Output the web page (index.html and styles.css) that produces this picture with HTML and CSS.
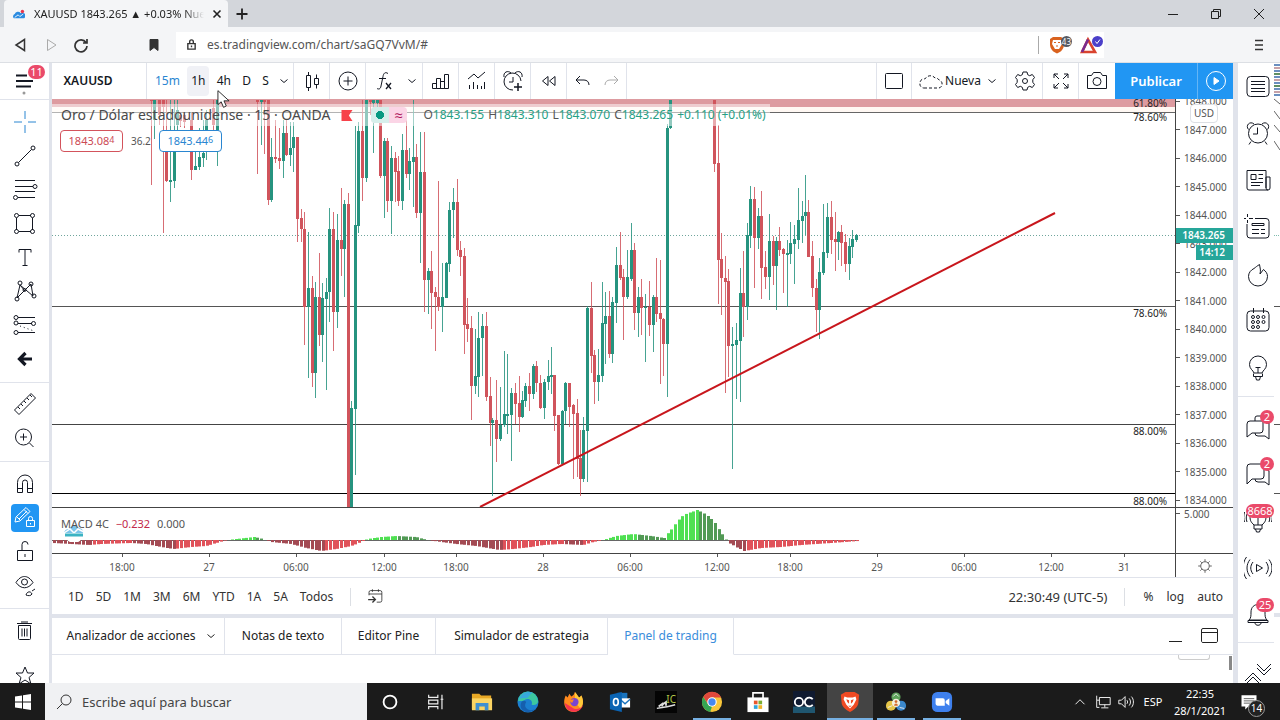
FILE: index.html
```html
<!DOCTYPE html>
<html lang="es">

<head>
    <meta charset="UTF-8" />
    <meta name="viewport" content="width=device-width, initial-scale=1.0" />
    <title>XAUUSD 1843.265</title>
    <link rel="stylesheet" href="styles.css">
</head>

<body>
    <header class="titlebar">
        <div class="tab">
            <svg class="favicon" viewBox="0 0 14 14"><path d="M1 12a3 3 0 0 1 1-5 4 4 0 0 1 7-1 3 3 0 0 1 4 6z" fill="#2b8be0" stroke="none" /><circle cx="11" cy="4" r="2" fill="#e8384f" stroke="none" /><path d="M2 11l4-3 2 2 4-3" stroke="#fff" fill="none" /></svg>
            <span class="tab-title">XAUUSD 1843.265 ▲ +0.03% Nueva</span>
            <button class="tab-close" aria-label="Cerrar pestaña"><svg viewBox="0 0 10 10"><path d="M1.500 1.500l7 7M8.500 1.500l-7 7" stroke-width="1.600" /></svg></button>
        </div>
        <button class="tab-new" aria-label="Nueva pestaña"><svg viewBox="0 0 12 12"><path d="M6 0.500v11M0.500 6h11" stroke-width="1.800" /></svg></button>
        <div class="window-buttons">
            <button aria-label="Minimizar"><svg viewBox="0 0 12 12"><path d="M1 6.500h10" /></svg></button>
            <button aria-label="Restaurar"><svg viewBox="0 0 12 12"><path d="M1.500 3.500h7v7h-7zM3.500 3.500v-2h7v7h-2" /></svg></button>
            <button aria-label="Cerrar"><svg viewBox="0 0 12 12"><path d="M1 1l10 10M11 1L1 11" /></svg></button>
        </div>
    </header>

    <nav class="addressbar">
        <button class="nav-btn" aria-label="Atrás"><svg viewBox="0 0 16 16"><path d="M11.500 2.500v11L3 8z" stroke-width="1.500" /></svg></button>
        <button class="nav-btn faded" aria-label="Adelante"><svg viewBox="0 0 16 16"><path d="M4.500 2.500v11L13 8z" /></svg></button>
        <button class="nav-btn" aria-label="Recargar"><svg viewBox="0 0 16 16"><path d="M13 5.500A6 6 0 1 0 14 9M14 2v4h-4" stroke-width="1.700" /></svg></button>
        <button class="nav-btn bookmark" aria-label="Marcador"><svg viewBox="0 0 16 16"><path d="M4 2.500h8v11l-4-3-4 3z" fill="#333" /></svg></button>
        <div class="url">
            <svg class="lock" viewBox="0 0 12 14"><path d="M2 6h8v6H2zM4 6V4a2 2 0 0 1 4 0v2M6 8v2" stroke-width="1.500" /></svg>
            <input type="text" aria-label="Dirección" value="es.tradingview.com/chart/saGQ7VvM/#">
            <div class="shields">
                <svg viewBox="0 0 24 18"><path d="M1 3l3-2h8l3 2v5c0 5-3 8-7 9.500C4 16 1 13 1 8z" fill="#d9621f" stroke="none" /><path d="M4 4h8l1 4-3 5H6L3 8z" fill="#fff" stroke="none" /><path d="M5 6.500h2M9 6.500h2M7 10h2" stroke="#d9621f" /><circle cx="17.500" cy="5.500" r="5.500" fill="#555962" stroke="none" /></svg>
                <span>43</span>
            </div>
            <svg class="bat" viewBox="0 0 24 18"><path d="M8 3.500L2 16h13z" stroke="#d9432f" stroke-width="2.600" /><path d="M8 3.500L2 16" stroke="#7a2b8f" stroke-width="2.600" /><circle cx="17.500" cy="5.500" r="5.500" fill="#4b3fc9" stroke="none" /><path d="M15.500 5.500l1.500 2 3-4" stroke="#fff" /></svg>
        </div>
        <button class="nav-btn menu" aria-label="Menú"><svg viewBox="0 0 16 16"><path d="M4 3.500h8M4 8h8M4 12.500h8" stroke-width="1.300" /></svg></button>
    </nav>

    <main class="workspace">
        <aside class="tools">
            <button class="tool hamburger" aria-label="Menú principal"><svg viewBox="0 0 28 28"><path d="M5 8.500h11M5 14h17M5 19.500h15" stroke-width="2" /><circle cx="13" cy="26" r="1.500" fill="#999" stroke="none" /></svg><span class="badge">11</span></button>
            <div class="tool-group">
                <button class="tool blue" aria-label="Cursor"><svg viewBox="0 0 28 28"><path d="M14 3v8M14 17v8M3 14h8M17 14h8" /></svg></button>
                <button class="tool" aria-label="Línea de tendencia"><svg viewBox="0 0 28 28"><path d="M7.500 20.500l13-13" /><circle cx="6" cy="22" r="2" /><circle cx="22" cy="6" r="2" /></svg></button>
                <button class="tool" aria-label="Fibonacci"><svg viewBox="0 0 28 28"><path d="M4 4.500h20M4 10.500h18M4 15.500h20M7 21.500h17" /><circle cx="24" cy="10.500" r="2" /><circle cx="4.500" cy="21.500" r="2" /></svg></button>
                <button class="tool" aria-label="Rectángulo"><svg viewBox="0 0 28 28"><path d="M8 5.500h12M8 21.500h12M5.500 8v12M21.500 8v12" /><circle cx="5.500" cy="5.500" r="2" /><circle cx="21.500" cy="5.500" r="2" /><circle cx="5.500" cy="21.500" r="2" /><circle cx="21.500" cy="21.500" r="2" /></svg></button>
                <button class="tool" aria-label="Texto"><svg viewBox="0 0 28 28"><path d="M8 8.500V5.500h12v3M14 5.500v16M11.500 21.500h5" /></svg></button>
                <button class="tool" aria-label="Patrones"><svg viewBox="0 0 28 28"><path d="M6 20l3-13 13 11-2-12L6 20M9 7l5 6" /><circle cx="6" cy="21" r="2" /><circle cx="9" cy="5" r="2" /><circle cx="20" cy="6" r="2" /><circle cx="23" cy="18" r="2" /><circle cx="13.500" cy="12" r="1.500" /></svg></button>
                <button class="tool" aria-label="Previsión"><svg viewBox="0 0 28 28"><path d="M7 5.500h17M7 11.500h14M7 20.500h17" /><path d="M9 14l14 5" stroke-dasharray="1 3" /><circle cx="5" cy="5.500" r="2" /><circle cx="5" cy="11" r="2" /><circle cx="22.500" cy="11.500" r="2" /><circle cx="5" cy="20.500" r="2" /></svg></button>
                <button class="tool" aria-label="Flecha"><svg viewBox="0 0 28 28"><path d="M21 13H9M14.500 7L8.500 13l6 6" stroke-width="3.200" /></svg></button>
            </div>
            <div class="tool-group">
                <button class="tool" aria-label="Regla"><svg viewBox="0 0 28 28"><path d="M3.500 19L20 2.500l4.500 4.500L8 23.500zM7 16l2 2M10 13l2 2M13 10l2 2M16 7l2 2M19 4l2 2" /></svg></button>
                <button class="tool" aria-label="Ampliar"><svg viewBox="0 0 28 28"><circle cx="12.500" cy="12" r="8" /><path d="M18.500 18l4 4M12.500 8.500v7M9 12h7" /></svg></button>
            </div>
            <div class="tool-group">
                <button class="tool" aria-label="Imán"><svg viewBox="0 0 28 28"><path d="M6.500 22.500v-10a7.500 7.500 0 0 1 15 0v10h-5v-10a2.500 2.500 0 0 0-5 0v10zM6.500 18.500h5M16.500 18.500h5" /></svg></button>
                <button class="tool" aria-label="Bloquear dibujo"><svg class="selected" viewBox="0 0 28 28"><path d="M4 18l1-5L15 3.500l4 4L9 17zM6 13l3 3M13 5.500l4 4M8 15l8-8" /><path d="M15.500 16.500h8v6h-8zM17.500 16v-1.500a2 2 0 0 1 4 0V16M19.500 19v1.500" /></svg></button>
                <button class="tool" aria-label="Bloquear todo"><svg viewBox="0 0 28 28"><path d="M6.500 12.500h15v10h-15zM11 12.500v-6a3 3 0 0 1 6 0M14 16v3" /></svg></button>
                <button class="tool" aria-label="Ocultar"><svg viewBox="0 0 28 28"><path d="M5 10.500c5-8 12-8 17 0-5 7-12 7-17 0z" /><circle cx="13.500" cy="10" r="3" /><path d="M15 23c1-4 5-4 6-1-1 2-4 2-6 1zM21 19l3-2" /></svg></button>
            </div>
            <div class="tool-group">
                <button class="tool" aria-label="Eliminar"><svg viewBox="0 0 28 28"><path d="M7.500 8.500h12v13a1 1 0 0 1-1 1h-10a1 1 0 0 1-1-1zM6 6.500h15M10 5h7M11 11.500v8M13.500 11.500v8M16 11.500v8" /></svg></button>
                <button class="tool star" aria-label="Favoritos"><svg viewBox="0 0 28 28"><path d="M14 5l2.500 6h6.500l-5 4.500 2 6.500-6-4-6 4 2-6.500-5-4.500h6.500z" /></svg></button>
            </div>
        </aside>

        <section class="center">
            <div class="toolbar">
                <button class="cell symbol">XAUUSD</button>
                <div class="cell intervals">
                    <button class="on">15m</button>
                    <button class="hover">1h</button>
                    <button>4h</button>
                    <button>D</button>
                    <button>S</button>
                    <button aria-label="Más intervalos"><svg class="chev" viewBox="0 0 8 6"><path d="M0.500 1.500L4 4.500l3.500-3" /></svg></button>
                </div>
                <button class="cell" aria-label="Velas"><svg viewBox="0 0 28 28"><path d="M8.500 8.500h4v12h-4zM10.500 5v3.500M10.500 20.500V24M16.500 11.500h4v6h-4zM18.500 7.500v4M18.500 17.500v4" /></svg></button>
                <button class="cell" aria-label="Comparar"><svg viewBox="0 0 28 28"><circle cx="14" cy="14" r="9" /><path d="M14 9.500v9M9.500 14h9" /></svg></button>
                <div class="cell fx">
                    <button aria-label="Indicadores"><svg viewBox="0 0 28 28"><path d="M16 6.500c-3-2-4.500 0-5 3L9 19c-.5 3-2 3.500-4 2.500M7 11.500h7" /><path d="M14 16l5 6M19 16l-5 6" stroke-width="1.300" /></svg></button>
                    <button aria-label="Favoritos de indicadores"><svg class="chev" viewBox="0 0 8 6"><path d="M0.500 1.500L4 4.500l3.500-3" /></svg></button>
                </div>
                <button class="cell" aria-label="Finanzas"><svg viewBox="0 0 28 28"><path d="M5.500 16.500h4v5h-4zM9.500 11.500h4v10h-4zM13.500 14.500h4v7h-4zM17.500 7.500h4v14h-4z" /></svg></button>
                <button class="cell" aria-label="Plantillas"><svg viewBox="0 0 28 28"><path d="M5 12l6-5 4 4 7-6" /><path d="M6.500 18v4M10.500 15v7M14.500 18v4M18.500 19v3M21.500 15v7" /></svg></button>
                <button class="cell" aria-label="Alerta"><svg viewBox="0 0 28 28"><path d="M22 14a8.500 8.500 0 1 0-8 9M5 10c-1-5 4-7 7-4M16 6c3-3 8-1 7 4M14 10v5h-4" /><path d="M19 16v8M15 20h8" stroke-width="1.500" /></svg></button>
                <button class="cell" aria-label="Repetir"><svg viewBox="0 0 28 28"><path d="M13 9.500v9L7.500 14zM20 9.500v9L14.500 14z" /></svg></button>
                <div class="cell history">
                    <button aria-label="Deshacer"><svg viewBox="0 0 28 28"><path d="M11 9l-4 4 4 4M7 13h8c3 0 5 2 5 5" /></svg></button>
                    <button class="faded" aria-label="Rehacer"><svg viewBox="0 0 28 28"><path d="M17 9l4 4-4 4M21 13h-8c-3 0-5 2-5 5" /></svg></button>
                </div>
                <div class="spacer"></div>
                <button class="cell" aria-label="Diseño"><svg viewBox="0 0 28 28"><rect x="5.500" y="6.500" width="17" height="15" rx="1" /></svg></button>
                <div class="cell layout">
                    <svg viewBox="0 0 28 28"><path d="M8 21h13a4 4 0 0 0 2-8 4 4 0 0 0-4-2 6 6 0 0 0-10 1 4 4 0 0 0-5 4 4 4 0 0 0 4 5" stroke-dasharray="3 2" /></svg>
                    <button>Nueva</button>
                    <button aria-label="Diseños"><svg class="chev" viewBox="0 0 8 6"><path d="M0.500 1.500L4 4.500l3.500-3" /></svg></button>
                </div>
                <button class="cell" aria-label="Ajustes"><svg viewBox="0 0 28 28"><path d="M12 5h4l.7 2.700 2 1 2.600-1.200 2.200 3-1.700 2.200v2.600l1.700 2.200-2.200 3-2.600-1.200-2 1L16 23h-4l-.7-2.700-2-1-2.600 1.200-2.200-3 1.700-2.200v-2.600l-1.700-2.200 2.200-3 2.600 1.200 2-1z" /><circle cx="14" cy="14" r="2.500" /></svg></button>
                <button class="cell" aria-label="Pantalla completa"><svg viewBox="0 0 28 28"><path d="M7 11V7h4M17 7h4v4M21 17v4h-4M11 21H7v-4M7 7l5 5M21 7l-5 5M21 21l-5-5M7 21l5-5" /></svg></button>
                <button class="cell last" aria-label="Foto"><svg viewBox="0 0 28 28"><path d="M4.500 8.500h4l2-3h7l2 3h4v13h-19z" /><circle cx="14" cy="14.500" r="4" /></svg></button>
                <button class="publish">Publicar</button>
                <button class="play" aria-label="Transmitir"><svg viewBox="0 0 28 28"><circle cx="14" cy="14" r="9.500" /><path d="M12 10.500v7l5-3.500z" fill="#fff" /></svg></button>
            </div>

            <div class="chart">
                <div class="plot">
                    <svg class="canvas" id="candles" viewBox="52 99 1123 408" preserveAspectRatio="none"></svg>
                    <span class="fib fib-top">61.80%</span>
                    <span class="fib fib-1">78.60%</span>
                    <span class="fib fib-2">78.60%</span>
                    <span class="fib fib-3">88.00%</span>
                    <span class="fib fib-4">88.00%</span>
                    <div class="legend">
                        <div class="legend-row">
                            <span class="name">Oro / Dólar estadounidense · 15 · OANDA</span>
                            <svg class="flag" viewBox="0 0 12 12"><path d="M0 0h12l-4 6 4 6H0z" fill="#f7424a" stroke="none" /></svg>
                            <span class="status"><i></i><b>≈</b></span>
                            <span class="ohlc">O<em>1843.155</em> H<em>1843.310</em> L<em>1843.070</em> C<em>1843.265</em> <em>+0.110 (+0.01%)</em></span>
                        </div>
                    </div>
                    <div class="quotes">
                        <button class="sell">1843.08<sup>4</sup></button>
                        <span class="spread">36.2</span>
                        <button class="buy">1843.44<sup>6</sup></button>
                    </div>
                </div>
                <div class="prices">
                    <ul>
                        <li>1848.000</li>
                        <li>1847.000</li>
                        <li>1846.000</li>
                        <li>1845.000</li>
                        <li>1844.000</li>
                        <li>1843.000</li>
                        <li>1842.000</li>
                        <li>1841.000</li>
                        <li>1840.000</li>
                        <li>1839.000</li>
                        <li>1838.000</li>
                        <li>1837.000</li>
                        <li>1836.000</li>
                        <li>1835.000</li>
                        <li>1834.000</li>
                    </ul>
                    <span class="currency">USD</span>
                    <span class="last-price">1843.265</span>
                    <span class="countdown">14:12</span>
                </div>
                <div class="macd">
                    <svg class="canvas" id="macd" viewBox="52 508 1123 45" preserveAspectRatio="none"></svg>
                    <svg class="tv-logo" viewBox="0 0 24 18"><circle cx="12" cy="10" r="9" fill="#fff" stroke="none" /><path d="M2 9a5 5 0 0 1 5-4 6 6 0 0 1 10-1 4 4 0 0 1 4 5z" fill="#7cc4ea" stroke="none" /><path d="M2 9l6-4 4 4 4-4 6 3" stroke="#fff" stroke-width="1.500" /><path d="M3 11h18" stroke="#3bb3c3" stroke-width="3" /></svg>
                    <div class="macd-legend">MACD 4C <em>−0.232</em> <span>0.000</span></div>
                </div>
                <div class="macd-scale">5.000</div>
                <div class="times" id="times"></div>
                <button class="axis-settings" aria-label="Ajustes de escala"><svg viewBox="0 0 28 28"><circle cx="14" cy="14" r="6" /><path d="M14 4.500v3M14 20.500v3M4.500 14h3M20.500 14h3M7.500 7.500l2 2M18.500 18.500l2 2M20.500 7.500l-2 2M9.500 18.500l-2 2" /></svg></button>
            </div>

            <div class="ranges">
                <button>1D</button>
                <button>5D</button>
                <button>1M</button>
                <button>3M</button>
                <button>6M</button>
                <button>YTD</button>
                <button>1A</button>
                <button>5A</button>
                <button>Todos</button>
                <i class="divider"></i>
                <button class="goto" aria-label="Ir a la fecha"><svg viewBox="0 0 28 28"><path d="M7 12V8.500a2 2 0 0 1 2-2h11a2 2 0 0 1 2 2V18a2 2 0 0 1-2 2h-4M7 10.500h15M11 5v3M18 5v3" /><path d="M6 17h8M11 13.500l3.500 3.500-3.500 3.500" stroke-width="1.500" /></svg></button>
                <button class="clock">22:30:49 (UTC-5)</button>
                <i class="divider scale-divider"></i>
                <button class="scale">%</button>
                <button class="scale">log</button>
                <button class="scale">auto</button>
            </div>

            <div class="panel-tabs">
                <button class="w-analyzer">Analizador de acciones <svg class="chev" viewBox="0 0 8 6"><path d="M0.500 1.500L4 4.500l3.500-3" /></svg></button>
                <button class="w-notes">Notas de texto</button>
                <button class="w-pine">Editor Pine</button>
                <button class="w-tester">Simulador de estrategia</button>
                <button class="w-trading active">Panel de trading</button>
                <div class="panel-actions">
                    <button aria-label="Minimizar panel"><svg viewBox="0 0 28 28"><path d="M8 19.500h13" /></svg></button>
                    <button aria-label="Maximizar panel"><svg viewBox="0 0 28 28"><path d="M6.500 8A1.500 1.500 0 0 1 8 6.500h13A1.500 1.500 0 0 1 22.500 8v11.500A1.500 1.500 0 0 1 21 20.500H8A1.500 1.500 0 0 1 6.500 19.500zM6.500 10.500h16" /></svg></button>
                </div>
            </div>
            <div class="panel-body">
                <i class="stub"></i>
                <i class="thumb"></i>
            </div>
        </section>

        <aside class="widgets">
            <button class="widget" aria-label="Lista"><svg viewBox="0 0 28 28"><rect x="3" y="3.500" width="22" height="20" rx="3.500" /><path d="M7 8.500h14M7 11.500h14M7 15.500h14M7 18.500h14" /></svg></button>
            <button class="widget" aria-label="Alertas"><svg viewBox="0 0 28 28"><circle cx="14" cy="13.500" r="9.500" /><path d="M4.500 9.500C1 5.500 6 .5 10 4M23.500 9.500C27 5.500 22 .5 18 4M13.500 7.500v6.500H9M7 21.500l-2 3M21 21.500l2 3" /></svg></button>
            <button class="widget" aria-label="Noticias"><svg viewBox="0 0 28 28"><path d="M22 10h4v11a2 2 0 0 1-4 0zM24 23H5a2 2 0 0 1-2-2V3.500h19V21M7 7.500h5v5H7zM14.500 7.500H19M14.500 11.500H19M7 15.500h12M7 18.500h9" /></svg></button>
            <button class="widget" aria-label="Ventana de datos"><svg viewBox="0 0 28 28"><path d="M11 4.500h11a3 3 0 0 1 3 3V21a3 3 0 0 1-3 3H6a3 3 0 0 1-3-3V10M3.500 0v3M3.500 6v3M0 4.500h2M5 4.500h4M8 9.500h12v2H8zM8 15.500h7M17 15.500h4M8 19.500h7M17 19.500h4" /></svg></button>
            <button class="widget" aria-label="Hotlist"><svg viewBox="0 0 28 28"><path d="M15.500 3.500C13 5 12 6 10 7.500c-3 1.500-5.500 4-5.500 8a9.500 9.500 0 0 0 19 0c0-3-1.500-5-4-7L16 13c1-4 0-6-.5-9.500z" /></svg></button>
            <button class="widget" aria-label="Calendario"><svg viewBox="0 0 28 28"><rect x="3" y="3" width="22" height="20" rx="3.500" /><path d="M9.500 0v5M19.500 0v5" /><circle cx="9" cy="9" r="1.500" /><circle cx="14" cy="9" r="1.500" /><circle cx="19.500" cy="9" r="1.500" /><circle cx="9" cy="14" r="1.500" /><circle cx="14" cy="14" r="1.500" /><circle cx="19.500" cy="14" r="1.500" /><circle cx="9" cy="19" r="1.500" /><circle cx="14" cy="19" r="1.500" /></svg></button>
            <button class="widget" aria-label="Ideas"><svg viewBox="0 0 28 28"><path d="M10 18c-1-3-4.500-4-4.500-8.500a8.500 8.500 0 0 1 17 0C22.500 14 19 15 18 18zM9.500 18.500v3h9v-3M11.500 21.500l1 3.500h3l1-3.500M14 18v-6M11.500 12.500h5" /></svg></button>
            <hr>
            <button class="widget" aria-label="Chats públicos"><svg viewBox="0 0 28 28"><path d="M3 24V11a3 3 0 0 1 3-3h13v9a3 3 0 0 1-3 3H8zM11 8V5a2 2 0 0 1 2-2h8M22 10h3v16l-4-3h-7a3 3 0 0 1-3-3" /></svg><span class="badge">2</span></button>
            <button class="widget" aria-label="Chats privados"><svg viewBox="0 0 28 28"><path d="M3 24V7a3 3 0 0 1 3-3h14v12a3 3 0 0 1-3 3H8zM22 9l3 2v14l-4-3h-7a3 3 0 0 1-3-3" /></svg><span class="badge">2</span></button>
            <button class="widget" aria-label="Flujo de ideas"><svg viewBox="0 0 28 28"><path d="M10 18c-3-3-4-4-4-9h16c0 5-1 6-4 9zM10 18v4h8v-4M11.500 22l1 3h3l1-3M14 18V9M3 7c-1 3-1 5 0 8M25 7c1 3 1 5 0 8M0.500 5c-1 4-1 7 0 10M27.500 5c1 4 1 7 0 10" /></svg><span class="badge wide">8668</span></button>
            <button class="widget" aria-label="Transmisiones"><svg viewBox="0 0 28 28"><path d="M12.500 10.500v7l6-3.500zM9 8c-3 4-3 8 0 12M22 8c3 4 3 8 0 12M6 5.500c-4 5-4 12 0 17M25 5.500c4 5 4 12 0 17M2.500 3c-4.500 6-4.500 16 0 22" /></svg></button>
            <button class="widget" aria-label="Notificaciones"><svg viewBox="0 0 28 28"><path d="M5 19c2-2 2-4 2-8 0-10 14-10 14 0 0 4 0 6 2 8zM4 19.500h20v2H4zM11 22c0 3 6 3 6 0" /></svg><span class="badge mid">25</span></button>
            <hr>
            <button class="widget" aria-label="Ocultar barra"><svg viewBox="0 0 28 28"><path d="M1 22l8-8 8 8M1 26l8-8 8 8M13 5l7 7 7-7M13 9l7 7 7-7" /></svg></button>
        </aside>
        <svg class="edge" viewBox="0 0 6 620" preserveAspectRatio="none">
            <path d="M0 2h6M0 8h6M0 14h6M0 20h6M0 26h6M0 32h6" stroke="#6a8fc0" stroke-width="2" />
            <path d="M0 5h6M0 17h6M0 29h6" stroke="#c7a2a8" stroke-width="2" />
            <path d="M0 11h6M0 23h6" stroke="#5f8f63" stroke-width="2" />
            <path d="M0 36l6 5M0 48l6 8M0 62l6 7M0 78l6 9" stroke="#666" />
            <path d="M0 243.500h6M0 361.500h6M0 430.500h6" stroke="#555" />
            <path d="M0 172.500h6" stroke="#7fbcae" stroke-dasharray="1 1" />
            <path d="M0 552h6" stroke="#e0e3eb" stroke-width="4" />
        </svg>
        <svg class="pointer" viewBox="0 0 14 20"><path d="M1 1v15l3.500-3 2.500 6 3-1.500-2.500-5.500H13z" fill="#fff" stroke="#222" /></svg>
    </main>

    <footer class="taskbar">
        <button class="start" aria-label="Inicio"><svg viewBox="0 0 16 16"><path d="M0 2.500L7 1.500V7.500H0zM8 1.300L16 0v7.500H8zM0 8.500h7v6L0 13.500zM8 8.500h8V16l-8-1.200z" fill="#fff" stroke="none" /></svg></button>
        <label class="search">
            <svg viewBox="0 0 16 16"><circle cx="10" cy="6" r="5" /><path d="M6.500 9.500L1 15" /></svg>
            <input type="text" placeholder="Escribe aquí para buscar">
        </label>
        <div class="apps">
            <button aria-label="Cortana"><svg viewBox="0 0 24 24"><circle cx="12" cy="12" r="7" stroke="#fff" stroke-width="2" /></svg></button>
            <button aria-label="Vista de tareas"><svg viewBox="0 0 24 24"><path d="M4 4v3h10V4M4 20v-3h10v3M4 10h10v4H4zM18.500 4v16M17 9h3" stroke="#eee" stroke-width="1.300" /></svg></button>
            <button aria-label="Explorador"><svg viewBox="0 0 24 24"><g stroke="none"><path d="M1 3h8l2 2h11v15H1z" fill="#e8a825" /><path d="M1 8h22v13H1z" fill="#fbd463" /><path d="M5 13h14v8h-4v-4H9v4H5z" fill="#3f8fd0" /></g></svg></button>
            <button aria-label="Edge"><svg viewBox="0 0 24 24"><g stroke="none"><circle cx="12" cy="12" r="11.500" fill="#1b7fd0" /><path d="M1 12A11 11 0 0 1 23 11c0 4-4 5-7 4 2-5-4-8-8-5-3 2-7 0-7 2z" fill="#3cc8a0" /><path d="M2 10a11 11 0 0 1 15-8c-4 2-3 5-7 6-4-1-7 0-8 2z" fill="#38a8dc" /><path d="M10 12c-4 6 3 11 10 8-7 6-17 2-16-5 0-4 4-6 6-3z" fill="#155fae" /></g></svg></button>
            <button aria-label="Firefox"><svg viewBox="0 0 24 24"><g stroke="none"><path d="M3 5l2 2 2-4 2 3c2-1 3-2 4-5 3 3 3 5 5 6l2-2c4 8 1 17-8 18C2 23-1 13 3 5z" fill="#ff8a1e" /><path d="M13 1c3 3 3 5 5 6l2-2c3 6 2 11-1 14l-6-7z" fill="#ffc83a" /><path d="M2 13c1 12 17 13 20 2-3 5-8 6-12 3z" fill="#f5344f" /><circle cx="12.500" cy="12" r="4.500" fill="#7a45d0" /><path d="M6 10l6-1-2 4z" fill="#ff8a1e" /></g></svg></button>
            <button aria-label="Outlook"><svg viewBox="0 0 24 24"><path d="M9 2h11v10H9z" fill="#1973bd" stroke="none" /><path d="M12 8h11v10H12z" fill="#fff" stroke="none" /><path d="M12 9l5.500 5L23 9" stroke="#1973bd" stroke-width="1.500" /><path d="M1 4l13-3v22L1 20z" fill="#0a64b4" stroke="none" /><ellipse cx="7.500" cy="12" rx="2.600" ry="3.800" stroke="#fff" stroke-width="1.800" /></svg></button>
            <button class="ic" aria-label="IC Markets"><svg viewBox="0 0 24 24"><path d="M0 0h24v24H0z" fill="#050505" stroke="none" /><path d="M2 19c7-1 13-2 20-4" stroke="#ddd" stroke-width="1.500" /><path d="M4 17l4-3v3M8 15l4-3v4" stroke="#ddd" stroke-width="2" /></svg><span>IC</span></button>
            <button class="open" aria-label="Chrome"><svg viewBox="0 0 24 24"><g stroke="none"><circle cx="12" cy="12" r="11" fill="#f8c63a" /><path d="M2.500 6.500A11 11 0 0 1 22 7H12l-4.500 7z" fill="#e0483c" /><path d="M2.500 6.500L8 15l4 2-2 5.800A11 11 0 0 1 2.500 6.500z" fill="#35a552" /><circle cx="12" cy="12" r="5.200" fill="#fff" /><circle cx="12" cy="12" r="4" fill="#4688f0" /></g></svg></button>
            <button aria-label="Tienda"><svg viewBox="0 0 24 24"><path d="M0.500 7h23v16h-23z" fill="#fff" stroke="none" /><path d="M6.500 8V2h11v6" stroke="#fff" stroke-width="1.800" /><g stroke="none"><path d="M7.500 10.500h4v4h-4z" fill="#e8562c" /><path d="M12.500 10.500h4v4h-4z" fill="#7cae32" /><path d="M7.500 15.500h4v4h-4z" fill="#2fa4dc" /><path d="M12.500 15.500h4v4h-4z" fill="#f0b429" /></g></svg></button>
            <button aria-label="OC"><svg viewBox="0 0 24 24"><path d="M0 0h24v24H0z" fill="#101a30" stroke="none" /><path d="M0 17h24v7H0z" fill="#1f5670" stroke="none" /><circle cx="6.500" cy="12" r="4.500" stroke="#fff" stroke-width="2" /><path d="M21.500 9a4.800 4.800 0 1 0 0 6" stroke="#fff" stroke-width="2" /></svg></button>
            <button class="open current" aria-label="Brave"><svg viewBox="0 0 24 24"><g stroke="none"><path d="M2 4l5-3h10l5 3-1 10c-1 4-5 7-9 9-4-2-8-5-9-9z" fill="#f04a23" /><path d="M6 6l3 1h6l3-1 1 3-3 6-4 4-4-4-3-6z" fill="#fff" /><path d="M8 9l3 1v4l-2-2zM16 9l-3 1v4l2-2zM10 16h4l-2 1.500z" fill="#f04a23" /></g></svg></button>
            <button class="open" aria-label="MetaTrader"><svg viewBox="0 0 24 24"><g stroke="none"><circle cx="12" cy="6.500" r="5" fill="#5da25a" /><circle cx="6.500" cy="16" r="5.500" fill="#e5c548" /><circle cx="17.500" cy="16" r="5.500" fill="#3b88cc" /><circle cx="12" cy="13" r="4.500" fill="#f4f0dc" /><circle cx="12" cy="11.500" r="1.500" fill="#d26a2a" /><path d="M10 16c0-3 4-3 4 0z" fill="#d26a2a" /></g><path d="M9 6l3-3 3 3M3 18l5-2M16 18l5 1" stroke="#eee" /></svg></button>
            <button class="open" aria-label="Zoom"><svg viewBox="0 0 24 24"><rect x="1" y="1" width="22" height="22" rx="6" fill="#3e80ee" stroke="none" /><path d="M5 8h8a2 2 0 0 1 2 2v6H7a2 2 0 0 1-2-2zM16 11l4-3v8l-4-3z" fill="#fff" stroke="none" /></svg></button>
        </div>
        <div class="tray">
            <button class="t-up" aria-label="Iconos ocultos"><svg viewBox="0 0 20 20"><path d="M5 12.500l5-5 5 5" /></svg></button>
            <button class="t-net" aria-label="Red"><svg viewBox="0 0 20 20"><path d="M6 5h12v8H6zM12 13v3M8 16.500h8M3 3v5h3M3 8v8h3" /></svg></button>
            <button class="t-snd" aria-label="Volumen"><svg viewBox="0 0 20 20"><path d="M2 8h3l4-4v12l-4-4H2zM11 8c1 1 1 3 0 4M13.500 6c2 2 2 6 0 8M16 4c3 3 3 9 0 12" /></svg></button>
            <span class="lang">ESP</span>
            <time>22:35<br>28/1/2021</time>
            <button class="notice" aria-label="Centro de actividades"><svg viewBox="0 0 24 24"><path d="M2 3h20v15H11l-4 4v-4H2z" fill="#fff" stroke="none" /><path d="M5 7.500h14M5 10.500h14M5 13.500h9" stroke="#333" /></svg><span>14</span></button>
        </div>
    </footer>
    <script src="script.js"></script>
</body>

</html>
```
FILE: styles.css
```css
* {
    margin: 0;
    padding: 0;
    box-sizing: border-box;
}

body {
    display: flex;
    flex-direction: column;
    height: 100vh;
    overflow: hidden;
    font: 12px/16px "Noto Sans", "Open Sans", sans-serif;
    color: #222;
    background: #fff;
}

button,
input {
    font: inherit;
    color: inherit;
    border: 0;
    background: none;
    white-space: nowrap;
}

button {
    display: flex;
    align-items: center;
    justify-content: center;
}

svg {
    display: block;
    flex: none;
    fill: none;
    stroke: currentColor;
}

em,
i,
b {
    font-style: normal;
    font-weight: normal;
}

.spacer {
    flex: 1;
}

.faded {
    color: #aaa;
}

.badge {
    position: absolute;
    background: #ea4a6a;
    color: #fff;
    font-size: 11px;
    line-height: 14px;
    height: 14px;
    border-radius: 7px;
    text-align: center;
}

/* browser */
.titlebar {
    flex: none;
    display: flex;
    height: 27px;
    background: #d3d6db;
}

.tab {
    display: flex;
    align-items: center;
    width: 224px;
    margin-left: 4px;
    padding: 0 6px 0 9px;
    background: #f4f5f7;
    border-radius: 4px 4px 0 0;
}

.favicon {
    width: 12px;
    height: 12px;
}

.tab-title {
    flex: 1;
    overflow: hidden;
    white-space: nowrap;
    margin: 0 8px 0 9px;
    font-size: 11px;
    -webkit-mask-image: linear-gradient(90deg, #000 88%, transparent);
    mask-image: linear-gradient(90deg, #000 88%, transparent);
}

.tab-close svg {
    width: 10px;
    height: 10px;
}

.tab-new {
    width: 27px;
}

.tab-new svg {
    width: 12px;
    height: 12px;
}

.window-buttons {
    display: flex;
    margin-left: auto;
}

.window-buttons button {
    width: 43px;
}

.window-buttons svg {
    width: 12px;
    height: 12px;
}

.addressbar {
    flex: none;
    display: flex;
    align-items: center;
    height: 35px;
    padding-left: 6px;
    background: #f4f5f7;
    color: #333;
}

.nav-btn {
    width: 30px;
    height: 30px;
}

.nav-btn svg {
    width: 16px;
    height: 16px;
}

.nav-btn.bookmark {
    margin-left: 43px;
}

.nav-btn.faded {
    color: #aaa;
}

.nav-btn.menu {
    margin: 0 6px 0 auto;
}

.url {
    flex: 1;
    display: flex;
    align-items: center;
    height: 26px;
    margin: 0 140px 0 7px;
    padding-left: 10px;
    background: #fff;
}

.url .lock {
    width: 11px;
    height: 13px;
}

.url input {
    flex: 1;
    margin-left: 10px;
    font-size: 12px;
    color: #555;
}

.shields {
    position: relative;
    margin-right: 7px;
    padding-left: 10px;
    border-left: 1px solid #aaa;
}

.shields svg,
.bat {
    width: 24px;
    height: 18px;
}

.shields span {
    position: absolute;
    right: 2px;
    top: 0;
    font-size: 8px;
    line-height: 11px;
    color: #fff;
}

/* layout */
.workspace {
    position: relative;
    flex: 1;
    min-height: 0;
    display: flex;
    background: #e0e3eb;
    border-top: 1px solid #dcdfe4;
}

.tools {
    flex: none;
    display: flex;
    flex-direction: column;
    width: 49px;
    margin-right: 3px;
    overflow: hidden;
    background: #fff;
    color: #131722;
}

.tool {
    flex: none;
    width: 100%;
    height: 34px;
}

.tool svg {
    width: 28px;
    height: 28px;
}

.tool.blue {
    color: #2a86d1;
}

.hamburger {
    position: relative;
    height: 36px;
}

.hamburger .badge {
    right: 4px;
    top: 2px;
    width: 17px;
}

.tool .selected {
    background: #2196f3;
    color: #fff;
    border-radius: 4px;
}

.tool-group {
    flex: none;
    padding: 5px 0;
    border-top: 1px solid #e0e3eb;
}

.tool.star {
    margin-top: 11px;
}

.center {
    flex: 1;
    min-width: 0;
    display: flex;
    flex-direction: column;
    background: #fff;
}

/* top toolbar */
.toolbar {
    flex: none;
    display: flex;
    height: 36px;
    font-size: 12px;
    color: #131722;
}

.cell {
    flex: none;
    display: flex;
    align-items: center;
    justify-content: center;
    width: 36px;
    border-right: 1px solid #e0e3eb;
}

.toolbar svg {
    width: 28px;
    height: 28px;
}

.toolbar .chev,
.panel-tabs .chev {
    width: 8px;
    height: 6px;
}

.cell.symbol {
    width: 95px;
    padding-right: 22px;
    font-weight: 600;
}

.cell.intervals {
    width: 147px;
    justify-content: space-between;
    padding: 0 1px 0 4px;
}

.intervals button {
    height: 30px;
    padding: 0 4px;
}

.intervals .on {
    color: #2a86d1;
}

.intervals .hover {
    background: #f0f1f6;
    border-radius: 4px;
}

.cell.fx {
    width: 57px;
    gap: 8px;
}

.cell.history {
    width: 60px;
}

.spacer + .cell {
    border-left: 1px solid #e0e3eb;
}

.cell.layout {
    width: 95px;
}

.layout button {
    padding: 0 6px 0 1px;
}

.cell.last {
    border: 0;
}

.publish,
.play {
    flex: none;
    width: 82px;
    background: #2196f3;
    color: #fff;
    font-size: 13px;
    font-weight: 600;
}

.play {
    width: 36px;
    border-left: 1px solid #64b5f6;
}

/* chart */
.chart {
    flex: 1;
    min-height: 0;
    display: grid;
    grid-template-columns: minmax(0, 1fr) 58px;
    grid-template-rows: minmax(0, 1fr) 47px 23px;
    color: #555;
}

.canvas {
    position: absolute;
    width: 100%;
    height: 100%;
}

.plot,
.prices,
.macd,
.times {
    position: relative;
    overflow: hidden;
}

.prices,
.macd-scale,
.axis-settings {
    border-left: 1px solid #444;
}

.macd,
.macd-scale {
    border-top: 1px solid #444;
    border-bottom: 1px solid #444;
}

.legend {
    position: absolute;
    left: 0;
    top: 5px;
    padding: 0 3px 0 9px;
    background: rgba(255, 255, 255, 0.5);
}

.legend-row {
    display: flex;
    align-items: center;
    height: 22px;
    white-space: nowrap;
}

.name {
    font-size: 14px;
    color: #4a4a4a;
}

.flag {
    width: 12px;
    height: 11px;
    margin: 0 18px 0 11px;
}

.status {
    display: flex;
    align-items: center;
    margin-right: 16px;
    background: #fbd5e6;
    border-radius: 4px;
    line-height: 16px;
}

.status i {
    width: 18px;
    height: 16px;
    border-radius: 4px 0 0 4px;
    background: radial-gradient(circle, #089981 4px, #d6efeb 4px);
}

.status b {
    width: 18px;
    text-align: center;
    font-size: 15px;
    color: #b0175c;
}

.ohlc em {
    color: #26a085;
    margin-right: 1px;
}

.quotes {
    position: absolute;
    left: 8px;
    top: 31px;
    display: flex;
    align-items: center;
    gap: 8px;
}

.quotes button {
    width: 63px;
    height: 22px;
    border: 1px solid #d3535c;
    border-radius: 4px;
    background: #fff;
    color: #cc4a55;
    font-size: 11px;
}

.quotes .buy {
    border-color: #2a86d1;
    color: #2a86d1;
}

.quotes sup {
    font-size: 9px;
    line-height: 9px;
    margin-bottom: 3px;
}

.spread {
    font-size: 10px;
}

.fib {
    position: absolute;
    right: 8px;
    font-size: 10px;
    line-height: 12px;
    color: #222;
}

.fib-top {
    top: -2px;
}

.fib-1 {
    top: 3%;
}

.fib-2 {
    top: 51%;
}

.fib-3 {
    top: 80%;
}

.fib-4 {
    top: 97%;
}

.prices ul {
    display: flex;
    flex-direction: column;
    justify-content: space-between;
    height: calc(100% + 5px);
    margin-top: -5px;
    list-style: none;
}

.prices li,
.macd-scale {
    display: flex;
    align-items: center;
    gap: 4px;
    font-size: 10px;
    line-height: 14px;
}

.prices li::before,
.macd-scale::before {
    content: "";
    width: 4px;
    height: 1px;
    background: #555;
}

.currency {
    position: absolute;
    left: 14px;
    top: 5px;
    width: 28px;
    line-height: 17px;
    border: 1px solid #dcdfe4;
    border-radius: 4px;
    background: #fff;
    font-size: 10px;
    text-align: center;
}

.last-price,
.countdown {
    position: absolute;
    right: 0;
    background: #26a69a;
    color: #fff;
    font-size: 10px;
    font-weight: 600;
    line-height: 15px;
    padding-right: 8px;
    text-align: right;
}

.last-price {
    top: 31.6%;
    width: 100%;
}

.countdown {
    top: 35.7%;
    width: 37px;
}

.macd-legend {
    position: absolute;
    left: 9px;
    top: 8px;
    font-size: 11px;
}

.macd-legend em {
    color: #c2284a;
    margin: 0 4px;
}

.tv-logo {
    position: absolute;
    left: 10px;
    top: 16px;
    width: 24px;
    height: 18px;
}

.macd-scale {
    align-items: flex-start;
    line-height: 12px;
}

.macd-scale::before {
    margin-top: 5px;
}

.times span {
    position: absolute;
    top: 0;
    width: 40px;
    margin-left: -20px;
    padding-top: 5px;
    text-align: center;
    font-size: 10px;
    line-height: 16px;
}

.times span::before {
    content: "";
    position: absolute;
    left: 20px;
    top: 0;
    width: 1px;
    height: 3px;
    background: #555;
}

.axis-settings {
    color: #222;
}

.axis-settings svg {
    width: 20px;
    height: 20px;
}

/* ranges */
.ranges {
    flex: none;
    display: flex;
    align-items: center;
    gap: 12px;
    height: 37px;
    padding: 2px 10px 0 16px;
    border-top: 1px solid #e0e3eb;
    color: #333;
}

.divider {
    width: 1px;
    height: 18px;
    margin-left: 5px;
    background: #dcdfe4;
}

.scale-divider {
    margin: 0 6px 0 4px;
}

.goto svg {
    width: 24px;
    height: 24px;
}

.clock {
    margin-left: auto;
    font-size: 13px;
}

.ranges .scale {
    margin-left: 1px;
}

.panel-tabs {
    flex: none;
    display: flex;
    height: 41px;
    border-top: 4px solid #e0e3eb;
}

.panel-tabs > button,
.panel-actions {
    border-right: 1px solid #e0e3eb;
    border-bottom: 1px solid #e0e3eb;
}

.panel-tabs > .active {
    color: #3a8ddb;
    border-bottom-color: #fff;
}

.panel-tabs > .w-analyzer {
    width: 173px;
    gap: 12px;
    padding-left: 6px;
}

.w-notes {
    width: 117px;
}

.w-pine {
    width: 94px;
}

.w-tester {
    width: 172px;
}

.w-trading {
    width: 126px;
}

.panel-actions {
    flex: 1;
    display: flex;
    justify-content: flex-end;
    gap: 6px;
    padding-right: 10px;
    border-right: 0;
}

.panel-actions svg {
    width: 28px;
    height: 28px;
}

.panel-body {
    flex: none;
    display: flex;
    justify-content: flex-end;
    gap: 19px;
    height: 28px;
    padding-right: 1px;
}

.stub {
    width: 32px;
    height: 5px;
    border: 1px solid #ccc;
    border-top: 0;
    border-radius: 0 0 3px 3px;
}

.thumb {
    width: 3px;
    height: 14px;
    margin-top: 1px;
    background: #888;
}

/* right bar */
.widgets {
    flex: none;
    width: 36px;
    margin-left: 5px;
    overflow: hidden;
    background: #fff;
    color: #131722;
}

.widget {
    position: relative;
    width: 100%;
    height: 47px;
    padding-left: 4px;
}

.widget svg {
    width: 28px;
    height: 28px;
}

.widgets hr {
    border: 0;
    height: 1px;
    margin: 4px 0 6px;
    background: #e0e3eb;
}

.widget .badge {
    right: 0;
    top: 7px;
    width: 14px;
}

.widget .badge.wide {
    width: 28px;
}

.widget .badge.mid {
    width: 18px;
}

.edge {
    width: 6px;
    height: 100%;
    background: #fff;
}

.pointer {
    position: absolute;
    left: 217px;
    top: 26px;
    width: 13px;
    height: 20px;
}

/* taskbar */
.taskbar {
    flex: none;
    display: flex;
    height: 37px;
    background: #1b1b1b;
    color: #fff;
}

.start {
    width: 45px;
}

.start svg,
.search svg {
    width: 16px;
    height: 16px;
}

.search {
    display: flex;
    align-items: center;
    gap: 10px;
    width: 322px;
    padding-left: 11px;
    background: #f0f1f3;
    color: #333;
}

.search input {
    flex: 1;
    font-size: 13px;
}

.search input::placeholder {
    color: #444;
}

.apps {
    display: flex;
}

.apps button {
    position: relative;
    width: 46px;
}

.apps svg {
    width: 22px;
    height: 22px;
}

.apps .open::after {
    content: "";
    position: absolute;
    left: 4px;
    right: 4px;
    bottom: 0;
    height: 2px;
    background: #76b0e2;
}

.apps .current {
    background: #444;
}

.apps .current::after {
    left: 0;
    right: 0;
}

.ic span {
    position: absolute;
    right: 13px;
    top: 11px;
    font-size: 10px;
    line-height: 10px;
    color: #b5c94a;
}

.tray {
    display: flex;
    align-items: center;
    margin-left: auto;
    font-size: 11px;
    text-align: center;
}

.tray button {
    width: 23px;
    height: 100%;
}

.tray svg {
    width: 18px;
    height: 18px;
}

.lang {
    width: 32px;
}

.tray time {
    width: 62px;
    line-height: 17px;
}

.tray .notice {
    position: relative;
    width: 49px;
    padding-right: 14px;
}

.notice span {
    position: absolute;
    right: 15px;
    bottom: 3px;
    width: 17px;
    border: 1px solid #999;
    border-radius: 50%;
    background: #222;
    font-size: 10px;
    line-height: 15px;
}
```
FILE: script.js
```js
var NS = "http://www.w3.org/2000/svg",
    UP = "#26937f",
    DOWN = "#d0545c";

// x, high, body top, body bottom, low, direction
var candles = [
    [151, 100, 100, 101, 185, 0], [154, 100, 100, 120, 139, 1], [159, 100, 100, 115, 125, 0], [163, 100, 100, 107, 233, 0],
    [166, 100, 130, 181, 182, 0], [170, 100, 180, 182, 202, 1], [174, 100, 130, 181, 188, 1], [177, 100, 110, 125, 150, 1],
    [180, 112, 115, 121, 127, 0], [184, 112, 115, 122, 128, 0], [191, 113, 120, 170, 180, 0], [195, 150, 166, 170, 170, 1],
    [199, 128, 157, 167, 170, 1], [203, 120, 153, 158, 167, 1], [206, 110, 120, 135, 160, 1], [213, 100, 108, 125, 130, 0],
    [217, 100, 100, 140, 166, 1], [257, 100, 100, 102, 174, 0], [261, 100, 100, 102, 145, 1], [264, 100, 100, 102, 154, 0],
    [268, 100, 100, 200, 205, 0], [271, 138, 157, 200, 202, 1], [275, 120, 157, 159, 163, 0], [279, 128, 158, 161, 169, 0],
    [283, 120, 133, 161, 178, 1], [286, 120, 133, 155, 156, 0], [290, 122, 148, 155, 166, 1], [293, 122, 137, 148, 172, 1],
    [297, 137, 137, 219, 242, 0], [301, 209, 218, 229, 242, 0], [304, 212, 229, 307, 345, 0], [308, 232, 288, 307, 378, 1],
    [312, 276, 288, 373, 387, 0], [315, 282, 297, 373, 398, 1], [319, 253, 297, 335, 346, 0], [322, 283, 298, 335, 362, 1],
    [326, 278, 292, 299, 390, 1], [329, 208, 229, 292, 322, 1], [333, 212, 229, 312, 351, 0], [337, 214, 240, 312, 328, 1],
    [341, 188, 240, 249, 276, 0], [344, 200, 204, 249, 297, 1], [348, 193, 204, 507, 507, 0], [351, 401, 408, 507, 507, 1],
    [355, 126, 225, 409, 475, 1], [358, 122, 131, 226, 233, 1], [362, 100, 131, 178, 201, 0], [366, 100, 100, 178, 182, 1],
    [370, 100, 100, 102, 115, 0], [373, 100, 100, 103, 153, 1], [377, 100, 100, 103, 115, 1], [380, 100, 100, 176, 178, 0],
    [384, 138, 141, 176, 218, 1], [387, 138, 141, 201, 212, 0], [391, 146, 158, 201, 234, 1], [395, 152, 158, 172, 202, 0],
    [398, 156, 171, 201, 206, 0], [402, 134, 150, 201, 210, 1], [406, 120, 150, 174, 178, 0], [409, 148, 161, 174, 190, 1],
    [413, 100, 157, 162, 207, 1], [416, 144, 157, 213, 218, 0], [420, 132, 172, 213, 263, 1], [424, 132, 172, 280, 312, 0],
    [428, 268, 271, 280, 314, 1], [431, 251, 271, 293, 329, 0], [435, 287, 292, 297, 351, 0], [438, 181, 297, 307, 311, 0],
    [442, 263, 297, 307, 332, 1], [446, 262, 263, 298, 298, 1], [449, 202, 210, 264, 272, 1], [453, 188, 202, 210, 238, 1],
    [457, 179, 202, 250, 256, 0], [460, 241, 250, 257, 276, 0], [464, 248, 256, 325, 354, 0], [467, 298, 324, 329, 342, 0],
    [471, 316, 328, 386, 420, 0], [475, 329, 376, 386, 394, 1], [478, 312, 338, 377, 397, 1], [482, 314, 326, 338, 376, 1],
    [486, 312, 326, 397, 401, 0], [490, 377, 396, 423, 446, 0], [492, 418, 420, 423, 496, 1], [496, 380, 420, 439, 462, 0],
    [500, 387, 425, 439, 441, 1], [504, 351, 414, 425, 427, 1], [507, 354, 414, 416, 434, 1], [511, 388, 393, 415, 461, 1],
    [515, 383, 393, 404, 424, 0], [519, 376, 403, 417, 432, 0], [522, 391, 400, 417, 418, 1], [525, 383, 386, 401, 407, 1],
    [529, 373, 386, 394, 411, 0], [533, 364, 366, 394, 399, 1], [536, 361, 366, 383, 392, 0], [540, 375, 383, 408, 409, 0],
    [544, 379, 382, 408, 419, 1], [548, 360, 376, 382, 390, 1], [551, 347, 375, 377, 394, 1], [554, 375, 375, 416, 431, 0],
    [558, 415, 415, 464, 465, 0], [562, 410, 411, 464, 465, 1], [565, 382, 383, 411, 424, 1], [569, 383, 383, 407, 427, 0],
    [573, 404, 405, 414, 479, 0], [577, 399, 413, 459, 477, 0], [580, 430, 458, 479, 496, 0], [583, 417, 430, 479, 482, 1],
    [587, 306, 308, 431, 482, 1], [591, 282, 308, 356, 373, 0], [594, 350, 355, 382, 404, 0], [598, 349, 375, 382, 401, 1],
    [602, 282, 323, 376, 382, 1], [605, 292, 316, 324, 364, 1], [609, 291, 316, 354, 358, 0], [612, 297, 302, 354, 363, 1],
    [616, 247, 265, 303, 323, 1], [620, 232, 265, 278, 280, 0], [623, 269, 277, 297, 340, 0], [627, 250, 277, 297, 299, 1],
    [631, 223, 250, 279, 281, 1], [634, 243, 250, 313, 330, 0], [638, 287, 297, 313, 337, 1], [641, 279, 297, 308, 335, 0],
    [645, 294, 307, 308, 362, 1], [649, 281, 307, 325, 336, 0], [653, 295, 297, 325, 352, 1], [656, 258, 297, 314, 322, 0],
    [660, 260, 313, 319, 384, 0], [663, 318, 319, 344, 376, 0], [667, 124, 128, 344, 397, 1], [670, 100, 100, 128, 129, 1],
    [714, 100, 100, 164, 172, 0], [718, 125, 163, 260, 304, 0], [721, 233, 259, 278, 315, 0], [725, 256, 278, 282, 393, 0],
    [728, 269, 281, 346, 377, 0], [732, 327, 344, 346, 469, 1], [736, 323, 340, 345, 399, 1], [740, 268, 293, 341, 402, 1],
    [743, 251, 293, 307, 337, 0], [747, 223, 235, 307, 320, 1], [750, 186, 199, 236, 248, 1], [754, 187, 199, 238, 288, 0],
    [758, 208, 216, 238, 249, 1], [761, 191, 216, 268, 299, 0], [765, 251, 267, 277, 289, 0], [769, 214, 241, 277, 300, 1],
    [773, 236, 241, 266, 285, 0], [776, 237, 241, 266, 310, 1], [779, 227, 241, 250, 256, 0], [783, 248, 249, 254, 293, 0],
    [787, 240, 253, 255, 307, 1], [790, 222, 243, 254, 264, 1], [794, 225, 239, 244, 284, 1], [798, 188, 220, 240, 249, 1],
    [802, 201, 216, 221, 243, 1], [805, 175, 212, 216, 235, 1], [808, 200, 212, 257, 257, 0], [812, 241, 256, 288, 297, 0],
    [816, 279, 288, 310, 332, 0], [819, 258, 272, 310, 339, 1], [823, 204, 252, 273, 275, 1], [827, 203, 217, 253, 258, 1],
    [831, 201, 217, 240, 254, 0], [835, 212, 239, 242, 271, 0], [838, 231, 232, 242, 260, 1], [841, 225, 232, 243, 266, 0],
    [845, 234, 242, 264, 272, 0], [849, 238, 246, 264, 280, 1], [852, 230, 239, 247, 258, 1], [856, 234, 235, 240, 242, 1]
];

// turning points of the histogram: x, height
var turns = [
    [52, -3], [88, -5], [100, -4], [130, -3], [145, -4], [160, -7], [172, -9], [190, -7], [205, -6], [215, -3], [226, 0],
    [235, 1], [253, 3], [262, 1], [270, -2], [290, -4], [305, -8], [320, -11], [335, -9], [350, -6], [360, -2], [366, 1],
    [380, 3], [395, 4], [415, 3], [426, 0], [440, -2], [455, -4], [475, -6], [498, -10], [512, -9], [530, -7], [542, -5],
    [560, -4], [582, -5], [592, -2], [602, 0], [615, 4], [632, 6], [650, 4], [663, 2], [668, 8], [675, 17], [682, 25],
    [696, 30], [706, 25], [715, 16], [722, 4], [728, -3], [735, -7], [743, -11], [760, -8], [780, -7], [800, -5],
    [830, -3], [857, -1]
];

var times = [
    [122, "18:00"], [209, "27"], [296, "06:00"], [384, "12:00"], [456, "18:00"], [543, "28"], [630, "06:00"],
    [717, "12:00"], [790, "18:00"], [877, "29"], [964, "06:00"], [1051, "12:00"], [1124, "31"]
];

function rect(parent, x, y, w, h, fill) {
    var el = document.createElementNS(NS, "rect");
    el.setAttribute("x", x);
    el.setAttribute("y", y);
    el.setAttribute("width", w);
    el.setAttribute("height", h);
    el.setAttribute("fill", fill);
    el.setAttribute("stroke", "none");
    parent.appendChild(el);
    return el;
}

function line(parent, x1, y1, x2, y2, color, width, dash) {
    var el = document.createElementNS(NS, "path");
    el.setAttribute("d", "M" + x1 + " " + y1 + "L" + x2 + " " + y2);
    el.setAttribute("stroke", color);
    el.setAttribute("stroke-width", width);
    if (dash) el.setAttribute("stroke-dasharray", dash);
    parent.appendChild(el);
}

function drawCandles() {
    var svg = document.getElementById("candles");
    rect(svg, 52, 99, 1123, 8, "#dd9ba0");
    rect(svg, 52, 107, 1123, 5, "#fff8f3");
    rect(svg, 52, 112, 1123, 1, "#666");
    rect(svg, 52, 306, 1123, 1, "#555");
    rect(svg, 52, 424, 1123, 1, "#444");
    rect(svg, 52, 493, 1123, 1, "#000");
    line(svg, 52, 235.5, 1175, 235.5, "#6fa59c", 1, "1 2");
    candles.forEach(function (c) {
        var color = c[5] ? UP : DOWN;
        rect(svg, c[0], c[1], 1, c[4] - c[1], color).setAttribute("opacity", 0.85);
        rect(svg, c[0] - 1, c[2], 3, Math.max(1, c[3] - c[2]), color);
    });
    line(svg, 480, 507, 1055, 213, "#c8161c", 2);
}

function heightAt(x) {
    for (var i = 1; i < turns.length; i++) {
        var a = turns[i - 1],
            b = turns[i];
        if (x <= b[0]) return a[1] + (b[1] - a[1]) * (x - a[0]) / (b[0] - a[0]);
    }
    return 0;
}

function drawMacd() {
    var svg = document.getElementById("macd"),
        prev = 0;
    rect(svg, 52, 540, 805, 1, "#666");
    for (var i = 0; i < 222; i++) {
        var x = Math.round(53 + i * 3.632),
            h = heightAt(x),
            color;
        if (h > 0) color = h >= prev ? "#4fe052" : "#529a55";
        else color = h > prev ? "#e0525a" : "#a34a53";
        prev = h;
        if (Math.abs(h) < 0.5) continue;
        rect(svg, x, h > 0 ? 540 - h : 540, 3, Math.abs(h), color);
    }
}

function drawTimes() {
    var box = document.getElementById("times");
    times.forEach(function (t) {
        var el = document.createElement("span");
        el.textContent = t[1];
        el.style.left = (t[0] - 52) / 1123 * 100 + "%";
        box.appendChild(el);
    });
}

drawCandles();
drawMacd();
drawTimes();
```
